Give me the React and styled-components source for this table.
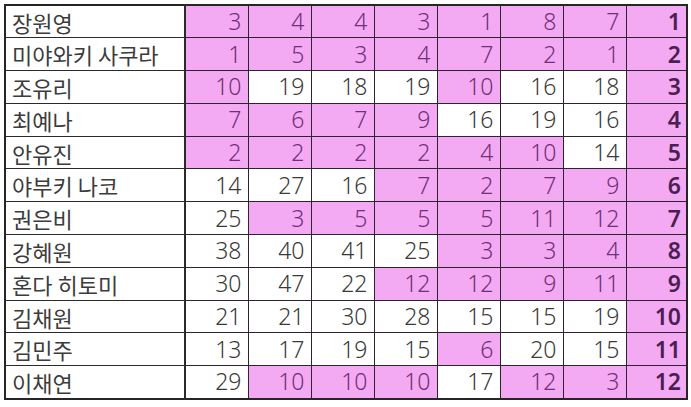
import React from "react";
import styled, { createGlobalStyle } from "styled-components";

const Global = createGlobalStyle`
  html, body { margin: 0; padding: 0; background: #ffffff; }
  body { font-family: "Noto Sans CJK KR", "Noto Sans", sans-serif; }
`;

const Page = styled.div`
  padding: 4px 0 0 4px;
  width: 691px;
  height: 407px;
  box-sizing: border-box;
`;

const Table = styled.table`
  border-collapse: collapse;
  table-layout: fixed;
  width: 682px;
  border: 2px solid #262626;
`;

const Row = styled.tr`
  height: 32.8px;
`;

const NameCell = styled.td`
  border: 1.5px solid #2a2a2a;
  border-right-width: 2px;
  padding: 0 0 0 6px;
  font-size: 22px;
  font-weight: 400;
  color: #3c3c3c;
  text-align: left;
  white-space: nowrap;
  line-height: 1;
  background: #ffffff;
`;

const NumCell = styled.td`
  border: 1.5px solid #2e2330;
  padding: 0 6px 0 0;
  font-family: "Noto Sans", sans-serif;
  font-size: 23px;
  font-weight: 300;
  line-height: 1;
  text-align: right;
  background: ${(p) => (p.$hit ? "#f4aaf2" : "#ffffff")};
  color: ${(p) => (p.$hit ? "#702f7a" : "#3a3a3a")};
`;

const RankCell = styled(NumCell)`
  font-weight: 600;
  background: #f4aaf2;
  color: #4a1f52;
  padding-right: 5px;
`;

const data = [
  ["장원영", [3, 4, 4, 3, 1, 8, 7], 1],
  ["미야와키 사쿠라", [1, 5, 3, 4, 7, 2, 1], 2],
  ["조유리", [10, 19, 18, 19, 10, 16, 18], 3],
  ["최예나", [7, 6, 7, 9, 16, 19, 16], 4],
  ["안유진", [2, 2, 2, 2, 4, 10, 14], 5],
  ["야부키 나코", [14, 27, 16, 7, 2, 7, 9], 6],
  ["권은비", [25, 3, 5, 5, 5, 11, 12], 7],
  ["강혜원", [38, 40, 41, 25, 3, 3, 4], 8],
  ["혼다 히토미", [30, 47, 22, 12, 12, 9, 11], 9],
  ["김채원", [21, 21, 30, 28, 15, 15, 19], 10],
  ["김민주", [13, 17, 19, 15, 6, 20, 15], 11],
  ["이채연", [29, 10, 10, 10, 17, 12, 3], 12],
];

export default function App() {
  return (
    <>
      <Global />
      <Page>
        <Table>
          <colgroup>
            <col style={{ width: 180 }} />
            {Array.from({ length: 7 }).map((_, i) => (
              <col key={i} style={{ width: 63 }} />
            ))}
            <col style={{ width: 61 }} />
          </colgroup>
          <tbody>
            {data.map(([name, nums, rank]) => (
              <Row key={name}>
                <NameCell>{name}</NameCell>
                {nums.map((n, i) => (
                  <NumCell key={i} $hit={n <= 12}>
                    {n}
                  </NumCell>
                ))}
                <RankCell>{rank}</RankCell>
              </Row>
            ))}
          </tbody>
        </Table>
      </Page>
    </>
  );
}
